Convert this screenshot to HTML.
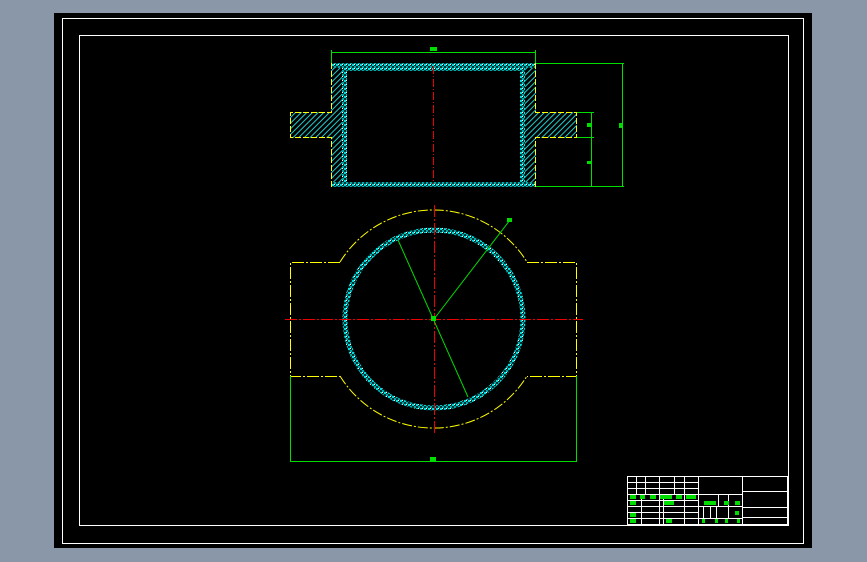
<!DOCTYPE html>
<html><head><style>
html,body{margin:0;padding:0;background:#8a97a9;width:867px;height:562px;overflow:hidden}
svg{display:block}
</style></head><body>
<svg width="867" height="562" viewBox="0 0 867 562" xmlns="http://www.w3.org/2000/svg" shape-rendering="crispEdges">
<defs>
<pattern id="h" width="4" height="4" patternUnits="userSpaceOnUse" patternTransform="rotate(45)">
<rect width="4" height="4" fill="#000"/><rect width="1.2" height="4" fill="#2cc"/></pattern>
<pattern id="c" width="4" height="4" patternUnits="userSpaceOnUse">
<rect width="4" height="4" fill="#033"/><rect width="2" height="2" fill="#0dd"/><rect x="2" y="2" width="2" height="2" fill="#0aa"/><rect x="2" y="0" width="1" height="1" fill="#fff"/></pattern>
</defs>
<rect x="54" y="13" width="758" height="535" fill="#000"/>
<rect x="62.5" y="18.5" width="741" height="525" fill="none" stroke="#fff" stroke-width="1"/>
<rect x="79.5" y="35.5" width="709" height="490" fill="none" stroke="#fff" stroke-width="1"/>

<g>
<rect x="290" y="112" width="287" height="26" fill="url(#h)"/>
<rect x="331" y="63" width="205" height="124" fill="url(#h)"/>
<rect x="342" y="68" width="183" height="114" fill="url(#c)"/>
<rect x="347" y="71" width="173" height="111" fill="#000"/>
<rect x="331" y="63" width="205" height="5" fill="url(#c)"/>
<rect x="331" y="182" width="205" height="5" fill="url(#c)"/>
<path d="M331.5 63V112.5H290.5V137.5H331.5V187M535.5 63V112.5H576.5V137.5H535.5V187" fill="none" stroke="#ff0" stroke-width="1" stroke-dasharray="6 2"/>
<line x1="433.5" y1="66" x2="433.5" y2="184" stroke="#e00" stroke-dasharray="8 2 1 2"/>
<g stroke="#0d0" stroke-width="1" fill="none">
<path d="M331 52.5H536M331.5 50V63M535.5 50V63"/>
<path d="M536 63.5H624M536 186.5H624M622.5 63V187M577 112.5H594M577 137.5H594M591.5 112V187"/>
</g>
<rect x="430" y="47" width="7" height="4" fill="#0d0"/>
<rect x="587" y="123" width="4" height="4" fill="#0d0"/>
<rect x="587" y="161" width="4" height="3" fill="#0d0"/>
<rect x="619" y="123" width="4" height="5" fill="#0d0"/>
</g>

<g fill="none">
<path d="M340 262.5H290.5V376.5H340M527 262.5H576.5V376.5H527" stroke="#ff0" stroke-dasharray="12 2 2 2"/>
<path d="M340 262A110 110 0 0 1 527 262M340 376A110 110 0 0 0 527 376" stroke="#ff0" stroke-dasharray="10 2 2 2" shape-rendering="auto"/>
<circle cx="434" cy="319" r="89" stroke="url(#c)" stroke-width="5" shape-rendering="auto"/>
<path d="M285 319.5H583M434.5 205V433" stroke="#e00" stroke-dasharray="12 2 2 2"/>
<path d="M290.5 376V461.5H576.5V376" stroke="#0d0"/>
<path d="M398 240L468 397M434 319L510 220" stroke="#0d0" shape-rendering="auto"/>
</g>
<rect x="431" y="316" width="5" height="5" fill="#0d0"/>
<rect x="430" y="457" width="6" height="4" fill="#0d0"/>
<rect x="507" y="218" width="5" height="4" fill="#0d0"/>

<g stroke="#fff" stroke-width="1" fill="none">
<rect x="627.5" y="476.5" width="160" height="48"/>
<path d="M627 482.5H698M627 488.5H698M627 494.5H742M627 500.5H698M627 506.5H742M627 512.5H698M627 518.5H742"/>
<path d="M636.5 476V494M645.5 476V494M659.5 476V525M674.5 476V494M684.5 476V525M698.5 476V525M742.5 476V525"/>
<path d="M641.5 494V525M663.5 494V525M742 491.5H787M742 507.5H787M742 517.5H787M718.5 494V506M728.5 494V518M703.5 506V518M710.5 506V518M716.5 506V518"/>
</g>
<g fill="#0d0">
<rect x="630" y="495" width="6" height="4"/><rect x="640" y="495" width="5" height="4"/><rect x="650" y="495" width="6" height="4"/>
<rect x="660" y="495" width="12" height="4"/><rect x="676" y="495" width="6" height="4"/><rect x="686" y="495" width="10" height="4"/>
<rect x="630" y="501" width="6" height="4"/><rect x="664" y="501" width="10" height="4"/>
<rect x="630" y="513" width="6" height="4"/><rect x="630" y="519" width="6" height="4"/><rect x="666" y="519" width="6" height="4"/>
<rect x="704" y="501" width="12" height="4"/><rect x="724" y="501" width="5" height="4"/><rect x="735" y="501" width="5" height="4"/>
<rect x="735" y="511" width="4" height="4"/>
<rect x="702" y="519" width="3" height="4"/><rect x="715" y="519" width="3" height="4"/><rect x="725" y="519" width="3" height="4"/><rect x="737" y="519" width="3" height="4"/>
</g>
</svg>
</body></html>
